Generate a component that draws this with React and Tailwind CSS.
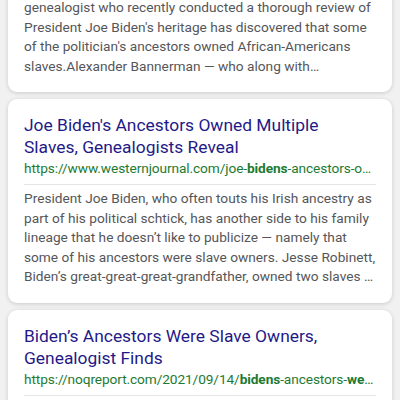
import React from "react";

const font = { fontFamily: "Roboto, 'Noto Sans', Arial, sans-serif" };

function Lines({ lines, className }) {
  return (
    <div className={className}>
      {lines.map((l, i) => (
        <div key={i} className="whitespace-nowrap overflow-hidden">{l}</div>
      ))}
    </div>
  );
}

function Card({ title, url, body, className = "" }) {
  return (
    <div className={"bg-white rounded-[9px] shadow-[0_1px_4px_rgba(0,0,0,0.16)] px-4 pt-[15px] pb-4 " + className}>
      {title && (
        <Lines lines={title} className="text-[17.4px] leading-[22px] text-[#1f1a88]" />
      )}
      {url && (
        <div className="text-[13.7px] tracking-[-0.1px] leading-[20px] text-[#1d7a32] truncate">{url}</div>
      )}
      {url && body && <div className="h-px bg-[#e6e6e6] mt-[6px] mb-[4px]" />}
      {body && <Lines lines={body} className="text-[13.7px] leading-[19.5px] text-[#555659]" />}
    </div>
  );
}

export default function App() {
  return (
    <div className="w-[400px] h-[400px] overflow-hidden bg-[#f1f1f1]" style={font}>
      <div className="flex flex-col gap-[7px] px-2">
        <Card
          className="-mt-[17px]"
          body={[
            "genealogist who recently conducted a thorough review of",
            "President Joe Biden's heritage has discovered that some",
            "of the politician's ancestors owned African-Americans",
            "slaves.Alexander Bannerman — who along with…",
          ]}
        />
        <Card
          title={["Joe Biden's Ancestors Owned Multiple", "Slaves, Genealogists Reveal"]}
          url={
            <>
              https://www.westernjournal.com/joe-<b className="font-bold">bidens</b>-ancestors-owned-multiple-slaves
            </>
          }
          body={[
            "President Joe Biden, who often touts his Irish ancestry as",
            "part of his political schtick, has another side to his family",
            "lineage that he doesn’t like to publicize — namely that",
            "some of his ancestors were slave owners. Jesse Robinett,",
            "Biden’s great-great-great-grandfather, owned two slaves …",
          ]}
        />
        <Card
          title={["Biden’s Ancestors Were Slave Owners,", "Genealogist Finds"]}
          url={
            <>
              https://noqreport.com/2021/09/14/<b className="font-bold">bidens</b>-ancestors-<b className="font-bold">were</b>-slave-owners
            </>
          }
          body={["\u00a0", "\u00a0"]}
        />
      </div>
    </div>
  );
}
